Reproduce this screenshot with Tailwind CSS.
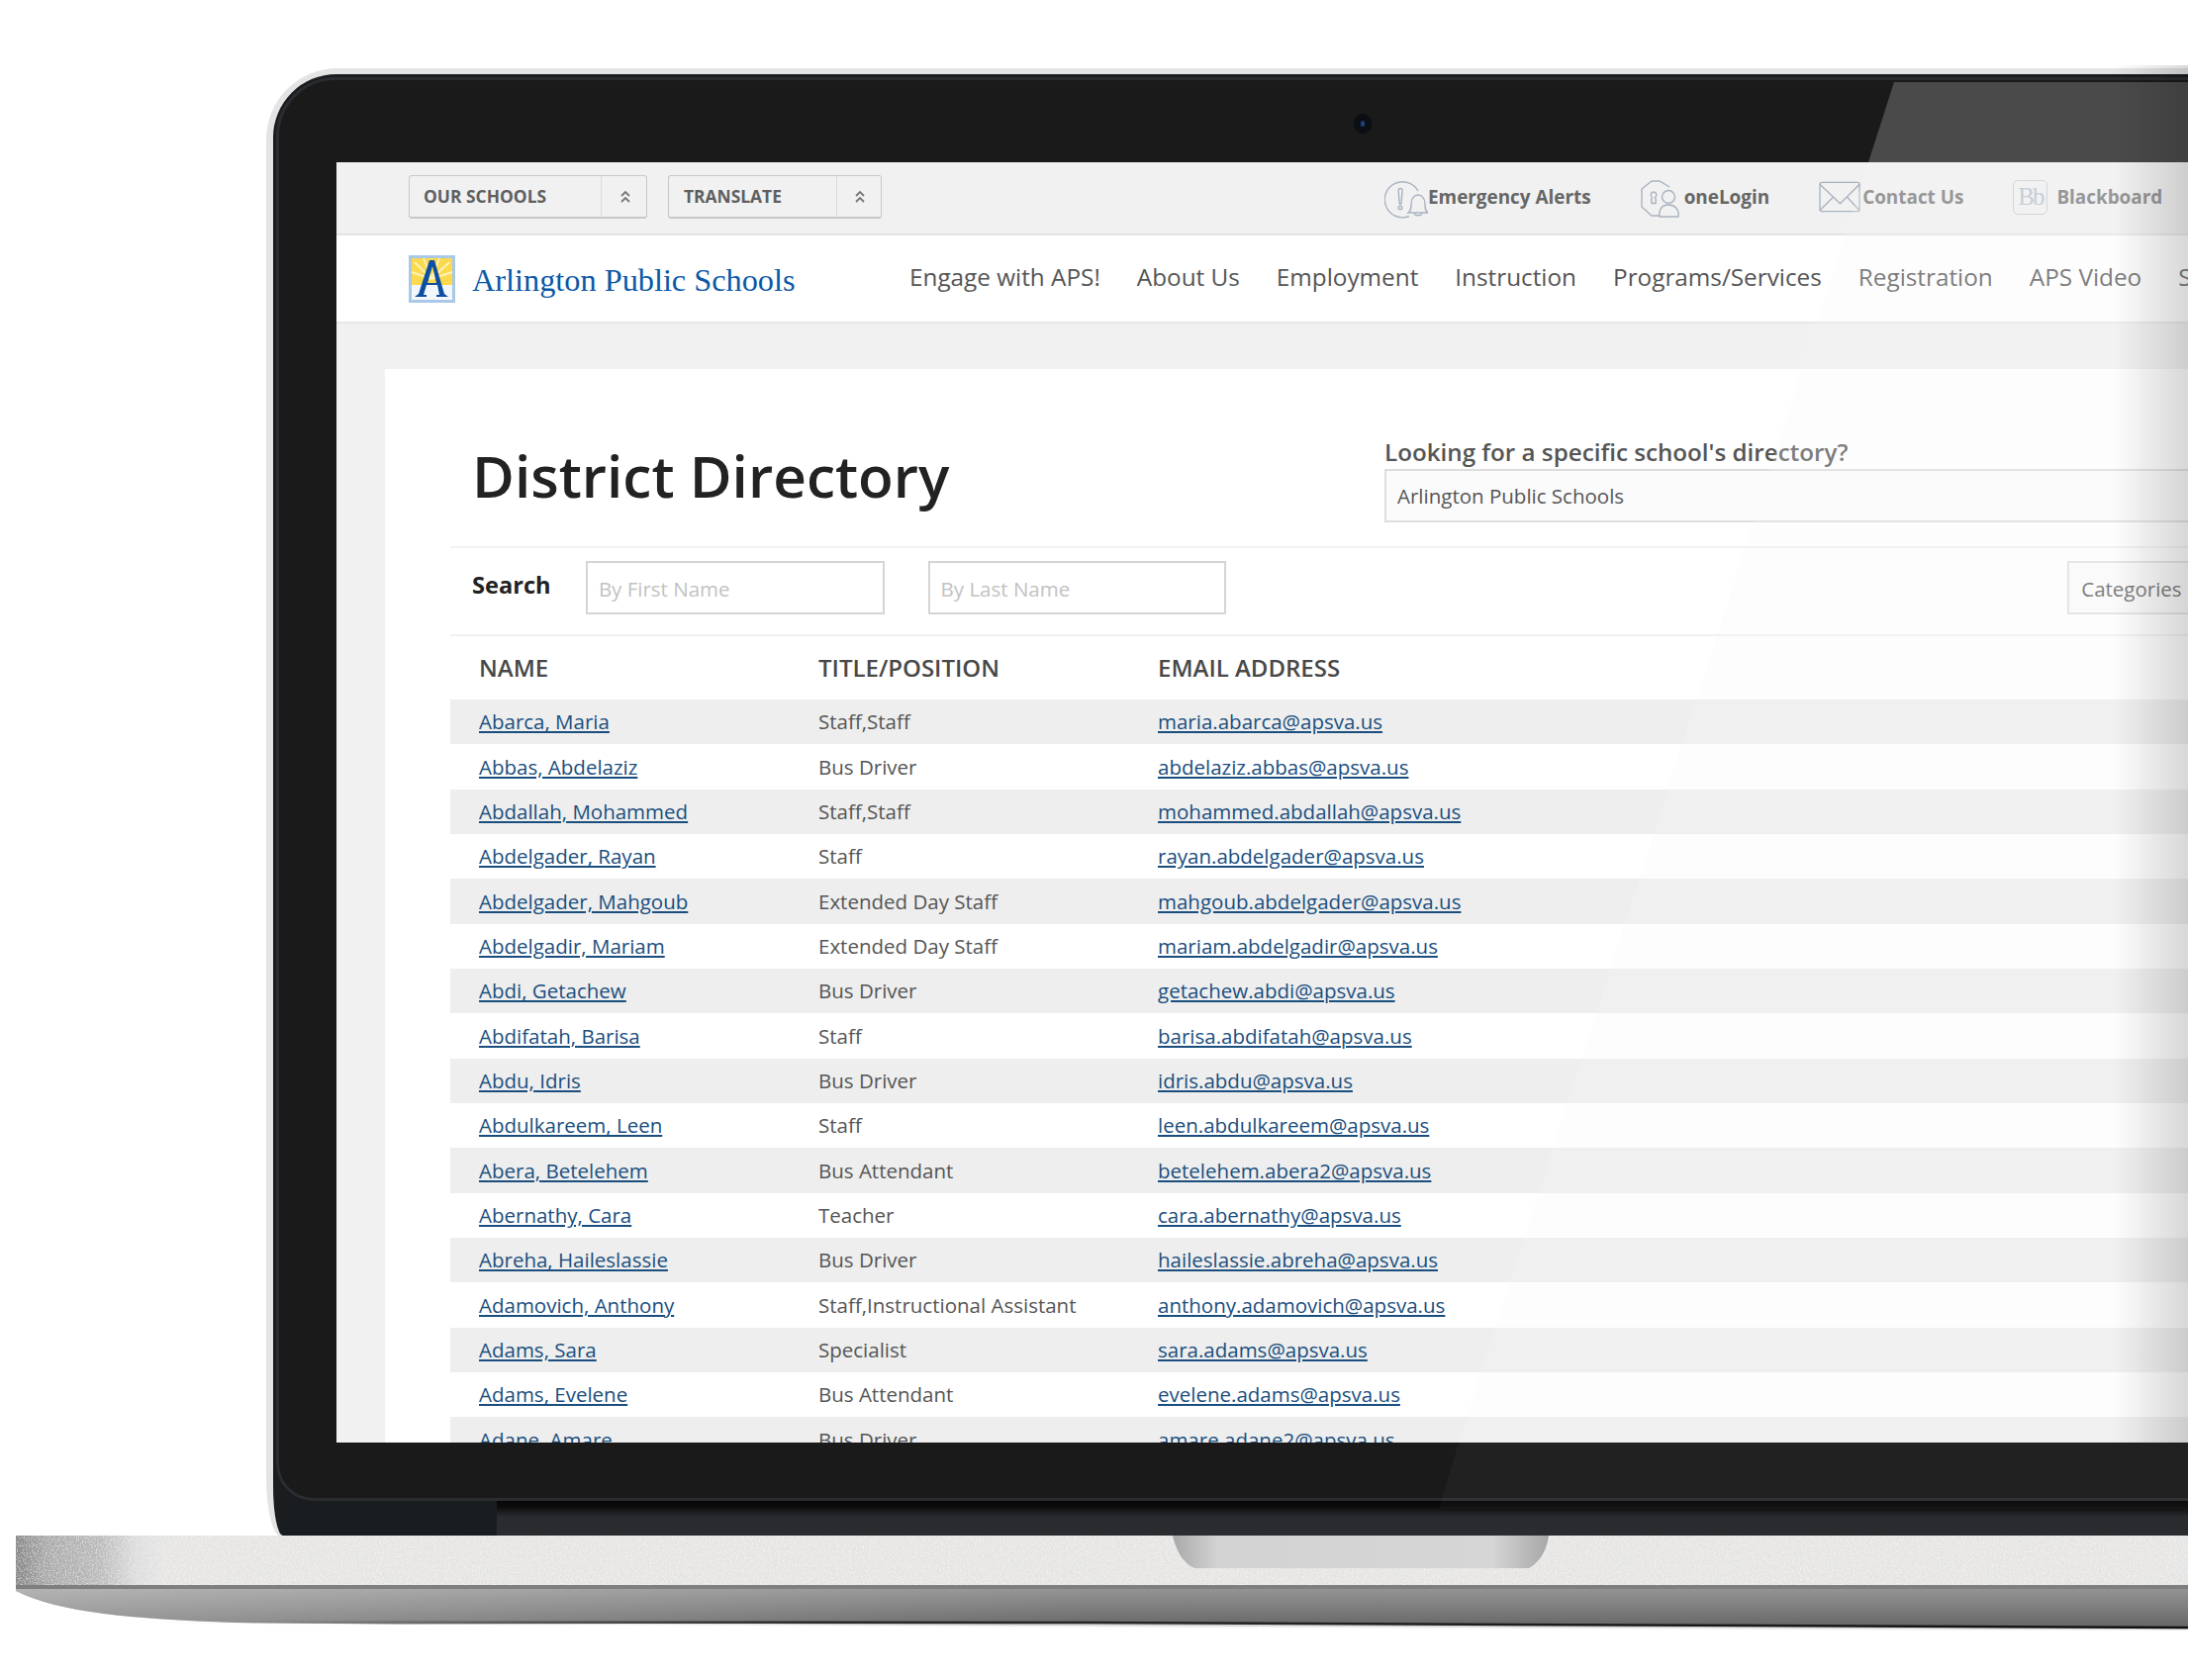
<!DOCTYPE html>
<html lang="en">
<head>
<meta charset="utf-8">
<title>District Directory</title>
<script src="https://cdn.jsdelivr.net/npm/@tailwindcss/browser@4"></script>
</head>
<body class="relative w-[2211px] h-[1698px] overflow-hidden bg-white font-['Open_Sans',sans-serif]">

<!-- lid -->
<div class="ml-[269px] mt-[69px] w-[2000px] h-[1483px] pl-[7px] pt-[6px] bg-[#e4e4e4] rounded-tl-[72px] rounded-bl-[14px_60px] overflow-hidden">
  <div class="flex flex-col h-full bg-[#1a1d20] rounded-tl-[64px] rounded-bl-[10px_50px] overflow-hidden">
    <!-- inner bezel -->
    <div class="relative ml-[3px] mt-[3px] h-[1439px] shrink-0 border-[3px] border-[#2b2c2f] rounded-tl-[60px] rounded-bl-[38px] bg-[#1a1a1a] pl-[58px] pt-[83px] pb-[56px]">
      <div class="absolute left-[1086px] top-[34px] w-[18px] h-[20px] rounded-full bg-[#0b0e13] flex items-center justify-center">
        <div class="w-[4px] h-[6px] rounded-full bg-[#1c3f7a]"></div>
      </div>

      <!-- screen -->
      <div class="w-[1900px] h-full overflow-hidden bg-[#f1f1f1]">
        <!-- utility bar -->
        <div class="flex h-[74px] pt-[13px] pl-[73px] border-b-2 border-[#e4e4e4] bg-[#f1f1f1]">
          <div class="flex w-[241px] h-[44px] rounded-[3px] border border-b-2 border-[#c8c8c8]">
            <div class="w-[194px] border-r border-[#dcdcdc] pl-[14px] text-[17.4px] leading-[41px] font-bold text-[#5f5f5f]">OUR SCHOOLS</div>
            <div class="flex flex-1 items-center justify-center pl-[2px]">
              <svg width="12" height="14" viewBox="0 0 12 14" fill="none" stroke="#777777" stroke-width="1.800"><path d="M2 6l4-4 4 4M2 12l4-4 4 4"/></svg>
            </div>
          </div>
          <div class="flex ml-[21px] w-[216px] h-[44px] rounded-[3px] border border-b-2 border-[#c8c8c8]">
            <div class="w-[170px] border-r border-[#dcdcdc] pl-[15px] text-[17.4px] leading-[41px] font-bold text-[#5f5f5f]">TRANSLATE</div>
            <div class="flex flex-1 items-center justify-center pl-[2px]">
              <svg width="12" height="14" viewBox="0 0 12 14" fill="none" stroke="#777777" stroke-width="1.800"><path d="M2 6l4-4 4 4M2 12l4-4 4 4"/></svg>
            </div>
          </div>

          <div class="flex items-center h-[44px] ml-[508px] text-[18.9px] font-bold text-[#666666] whitespace-nowrap">
            <svg class="shrink-0 mt-[3px]" width="44" height="40" viewBox="0 0 44 40" fill="none" stroke="#a9b3bf" stroke-width="1.400">
              <path d="M25 37.500A18 18 0 1 1 34 12"/>
              <path d="M16 9.500c-1.500 0-2 1-1.800 2.500l1 13h1.800l1-13c.2-1.500-.5-2.500-2-2.500z"/>
              <circle cx="16" cy="29" r="1.800"/>
              <path d="M24 34c3-2 3-5 3-9 0-5 3-9 7-9s7 4 7 9c0 4 0 7 3 9z"/>
              <path d="M30 34.500c.5 3 7.500 3 8 0"/>
            </svg>
            <span>Emergency Alerts</span>
          </div>
          <div class="flex items-center h-[44px] ml-[49px] text-[18.9px] font-bold text-[#666666] whitespace-nowrap">
            <svg class="shrink-0 mt-[3px]" width="45" height="40" viewBox="0 0 45 40" fill="none" stroke="#a9b3bf" stroke-width="1.400">
              <path d="M20 37h-8L2 28V10L12 2h8l10 6"/>
              <path d="M14 13a3 3 0 0 0-1.500 5.500c-1 1.500-1 4-.5 6h4c.5-2 .5-4.500-.5-6A3 3 0 0 0 14 13z"/>
              <circle cx="29" cy="18" r="6.500"/>
              <path d="M20 38c-1-8 3-12 9-12s11 4 10 12z"/>
            </svg>
            <span>oneLogin</span>
          </div>
          <div class="flex items-center h-[44px] ml-[50px] text-[18.9px] font-bold text-[#777777] whitespace-nowrap">
            <svg class="shrink-0" width="44" height="32" viewBox="0 0 45 32" fill="none" stroke="#a9b3bf" stroke-width="1.400">
              <rect x="1" y="1" width="41" height="30" rx="2"/>
              <path d="M1 3l21 20L42 3M1 30l14-14M42 30L29 16"/>
            </svg>
            <span>Contact Us</span>
          </div>
          <div class="flex items-center h-[44px] ml-[50px] text-[18.9px] font-bold text-[#777777] whitespace-nowrap">
            <div class="flex items-center w-[44px] shrink-0">
              <div class="flex items-center justify-center w-[35px] h-[35px] rounded-[5px] border-[1.5px] border-[#c3ccd5] text-[25px] font-normal tracking-[-2px] font-['Liberation_Serif',serif] text-[#b4c0cc]">Bb</div>
            </div>
            <span>Blackboard</span>
          </div>
        </div>

        <!-- main nav -->
        <div class="flex items-center h-[89px] pl-[73px] bg-white border-b-2 border-[#e6e6e6] whitespace-nowrap">
          <svg class="shrink-0" width="47" height="48" viewBox="0 0 47 48">
            <rect width="47" height="48" fill="#a9c9e6"/>
            <rect x="3" y="3" width="41" height="42" fill="#f4f8fc"/>
            <rect x="3" y="3" width="41" height="27" fill="#fcd94d"/>
            <g stroke="#fff3b8" stroke-width="2"><path d="M23 24L6 7M23 24L15 3M23 24l8-21M23 24L41 7M23 24L3 17M23 24l21-7"/></g>
            <path d="M21 5h5l10 34 4 3H28v-2h3l-2-10H18l-3 10h3v2H6l4-3zM19 28h9l-4-17z" fill="#0c4fa3" fill-rule="evenodd"/>
          </svg>
          <div class="ml-[17px] mt-[4px] w-[442px] shrink-0 text-[32.3px] leading-none font-['Liberation_Serif',serif] text-[#0b58a6]">Arlington Public Schools</div>
          <div class="flex gap-[37px] -mt-[3px] text-[24.3px] font-medium text-[#555555]">
            <span>Engage with APS!</span>
            <span>About Us</span>
            <span>Employment</span>
            <span>Instruction</span>
            <span>Programs/Services</span>
            <span>Registration</span>
            <span>APS Video</span>
            <span>Staff</span>
          </div>
        </div>

        <!-- content -->
        <div class="pl-[49px] pt-[46px]">
          <div class="w-[1900px] h-[1200px] pl-[66px] bg-white">
            <div class="flex h-[179px] border-b-2 border-[#f1f1f1] box-content">
              <div class="w-[944px] shrink-0 pl-[22px] pt-[71px]">
                <h1 class="text-[58.5px] leading-[72px] font-semibold text-[#222222]">District Directory</h1>
              </div>
              <div class="pt-[70px]">
                <div class="text-[24.2px] leading-[27px] font-semibold text-[#555555] whitespace-nowrap">Looking for a specific school's directory?</div>
                <div class="mt-[4px] w-[1000px] h-[54px] pl-[11px] border-2 border-[#dddddd] bg-[#fbfbfb] text-[20.5px] leading-[50px] text-[#555555]">Arlington Public Schools</div>
              </div>
            </div>

            <div class="flex h-[89px] pt-[13px] border-b-2 border-[#f1f1f1]">
              <div class="w-[137px] pl-[22px] text-[23.6px] leading-[48px] font-bold text-[#222222]">Search</div>
              <div class="w-[302px] h-[54px] pl-[11px] border-2 border-[#d5d5d5] bg-white text-[20.5px] leading-[52px] text-[#c2c2c2]">By First Name</div>
              <div class="ml-[44px] w-[302px] h-[54px] pl-[11px] border-2 border-[#d5d5d5] bg-white text-[20.5px] leading-[52px] text-[#c2c2c2]">By Last Name</div>
              <div class="ml-[850px] w-[200px] h-[54px] pl-[12px] border-2 border-[#dfdfdf] bg-[#fbfbfb] text-[20.5px] leading-[52px] text-[#555555]">Categories</div>
            </div>

            <div class="grid grid-cols-[343px_343px_1fr] items-center h-[64px] pl-[29px] text-[24px] font-semibold text-[#484848]">
              <div>NAME</div><div>TITLE/POSITION</div><div>EMAIL ADDRESS</div>
            </div>

            <div class="text-[20.5px] text-[#555555] whitespace-nowrap">
              <div class="grid grid-cols-[343px_343px_1fr] items-center h-[45.33px] pl-[29px] bg-[#eeeeee]"><a href="#" class="justify-self-start underline text-[#1a4e7e]">Abarca, Maria</a><div>Staff,Staff</div><a href="#" class="justify-self-start underline text-[#1a4e7e]">maria.abarca@apsva.us</a></div>
              <div class="grid grid-cols-[343px_343px_1fr] items-center h-[45.33px] pl-[29px]"><a href="#" class="justify-self-start underline text-[#1a4e7e]">Abbas, Abdelaziz</a><div>Bus Driver</div><a href="#" class="justify-self-start underline text-[#1a4e7e]">abdelaziz.abbas@apsva.us</a></div>
              <div class="grid grid-cols-[343px_343px_1fr] items-center h-[45.33px] pl-[29px] bg-[#eeeeee]"><a href="#" class="justify-self-start underline text-[#1a4e7e]">Abdallah, Mohammed</a><div>Staff,Staff</div><a href="#" class="justify-self-start underline text-[#1a4e7e]">mohammed.abdallah@apsva.us</a></div>
              <div class="grid grid-cols-[343px_343px_1fr] items-center h-[45.33px] pl-[29px]"><a href="#" class="justify-self-start underline text-[#1a4e7e]">Abdelgader, Rayan</a><div>Staff</div><a href="#" class="justify-self-start underline text-[#1a4e7e]">rayan.abdelgader@apsva.us</a></div>
              <div class="grid grid-cols-[343px_343px_1fr] items-center h-[45.33px] pl-[29px] bg-[#eeeeee]"><a href="#" class="justify-self-start underline text-[#1a4e7e]">Abdelgader, Mahgoub</a><div>Extended Day Staff</div><a href="#" class="justify-self-start underline text-[#1a4e7e]">mahgoub.abdelgader@apsva.us</a></div>
              <div class="grid grid-cols-[343px_343px_1fr] items-center h-[45.33px] pl-[29px]"><a href="#" class="justify-self-start underline text-[#1a4e7e]">Abdelgadir, Mariam</a><div>Extended Day Staff</div><a href="#" class="justify-self-start underline text-[#1a4e7e]">mariam.abdelgadir@apsva.us</a></div>
              <div class="grid grid-cols-[343px_343px_1fr] items-center h-[45.33px] pl-[29px] bg-[#eeeeee]"><a href="#" class="justify-self-start underline text-[#1a4e7e]">Abdi, Getachew</a><div>Bus Driver</div><a href="#" class="justify-self-start underline text-[#1a4e7e]">getachew.abdi@apsva.us</a></div>
              <div class="grid grid-cols-[343px_343px_1fr] items-center h-[45.33px] pl-[29px]"><a href="#" class="justify-self-start underline text-[#1a4e7e]">Abdifatah, Barisa</a><div>Staff</div><a href="#" class="justify-self-start underline text-[#1a4e7e]">barisa.abdifatah@apsva.us</a></div>
              <div class="grid grid-cols-[343px_343px_1fr] items-center h-[45.33px] pl-[29px] bg-[#eeeeee]"><a href="#" class="justify-self-start underline text-[#1a4e7e]">Abdu, Idris</a><div>Bus Driver</div><a href="#" class="justify-self-start underline text-[#1a4e7e]">idris.abdu@apsva.us</a></div>
              <div class="grid grid-cols-[343px_343px_1fr] items-center h-[45.33px] pl-[29px]"><a href="#" class="justify-self-start underline text-[#1a4e7e]">Abdulkareem, Leen</a><div>Staff</div><a href="#" class="justify-self-start underline text-[#1a4e7e]">leen.abdulkareem@apsva.us</a></div>
              <div class="grid grid-cols-[343px_343px_1fr] items-center h-[45.33px] pl-[29px] bg-[#eeeeee]"><a href="#" class="justify-self-start underline text-[#1a4e7e]">Abera, Betelehem</a><div>Bus Attendant</div><a href="#" class="justify-self-start underline text-[#1a4e7e]">betelehem.abera2@apsva.us</a></div>
              <div class="grid grid-cols-[343px_343px_1fr] items-center h-[45.33px] pl-[29px]"><a href="#" class="justify-self-start underline text-[#1a4e7e]">Abernathy, Cara</a><div>Teacher</div><a href="#" class="justify-self-start underline text-[#1a4e7e]">cara.abernathy@apsva.us</a></div>
              <div class="grid grid-cols-[343px_343px_1fr] items-center h-[45.33px] pl-[29px] bg-[#eeeeee]"><a href="#" class="justify-self-start underline text-[#1a4e7e]">Abreha, Haileslassie</a><div>Bus Driver</div><a href="#" class="justify-self-start underline text-[#1a4e7e]">haileslassie.abreha@apsva.us</a></div>
              <div class="grid grid-cols-[343px_343px_1fr] items-center h-[45.33px] pl-[29px]"><a href="#" class="justify-self-start underline text-[#1a4e7e]">Adamovich, Anthony</a><div>Staff,Instructional Assistant</div><a href="#" class="justify-self-start underline text-[#1a4e7e]">anthony.adamovich@apsva.us</a></div>
              <div class="grid grid-cols-[343px_343px_1fr] items-center h-[45.33px] pl-[29px] bg-[#eeeeee]"><a href="#" class="justify-self-start underline text-[#1a4e7e]">Adams, Sara</a><div>Specialist</div><a href="#" class="justify-self-start underline text-[#1a4e7e]">sara.adams@apsva.us</a></div>
              <div class="grid grid-cols-[343px_343px_1fr] items-center h-[45.33px] pl-[29px]"><a href="#" class="justify-self-start underline text-[#1a4e7e]">Adams, Evelene</a><div>Bus Attendant</div><a href="#" class="justify-self-start underline text-[#1a4e7e]">evelene.adams@apsva.us</a></div>
              <div class="grid grid-cols-[343px_343px_1fr] items-center h-[45.33px] pl-[29px] bg-[#eeeeee]"><a href="#" class="justify-self-start underline text-[#1a4e7e]">Adane, Amare</a><div>Bus Driver</div><a href="#" class="justify-self-start underline text-[#1a4e7e]">amare.adane2@apsva.us</a></div>
            </div>
          </div>
        </div>
      </div>
    </div>
    <!-- hinge -->
    <div class="ml-[226px] flex-1 bg-[linear-gradient(180deg,#060606,#0c0c0c_6px,#2a2b2f_16px,#2b2c30)]"></div>
  </div>
</div>

<!-- base top deck -->
<div class="relative ml-[16px] h-[50px] overflow-hidden bg-[linear-gradient(90deg,#868686_0,#a8a8a8_30px,#bababa_85px,#dcdcdc_122px,#e5e4e3_150px)]">
  <svg class="absolute inset-0" width="2195" height="50">
    <filter id="grain" x="0" y="0" width="100%" height="100%">
      <feTurbulence type="fractalNoise" baseFrequency="0.85" numOctaves="2" seed="4"/>
      <feColorMatrix values="0 0 0 0 1  0 0 0 0 1  0 0 0 0 1  0 0 0 3.500 -1.600"/>
    </filter>
    <rect width="2195" height="50" filter="url(#grain)" opacity="0.55"/>
  </svg>
  <svg class="absolute left-[1169px] top-0" width="380" height="33" viewBox="0 0 380 33">
    <defs>
      <linearGradient id="notch" x1="0" x2="1" y1="0" y2="0">
        <stop offset="0" stop-color="#a9a9a9"/><stop offset="0.12" stop-color="#d2d2d2"/>
        <stop offset="0.85" stop-color="#d6d6d6"/><stop offset="1" stop-color="#a6a6a6"/>
      </linearGradient>
    </defs>
    <path d="M0 0h380c-2 14-8 26-20 33H22C10 28 3 14 0 0z" fill="url(#notch)"/>
  </svg>
</div>

<!-- base front edge -->
<svg class="block" width="2211" height="52" viewBox="0 0 2211 52">
  <defs>
    <linearGradient id="front" x1="0" x2="0" y1="0" y2="1">
      <stop offset="0" stop-color="#98989a"/><stop offset="1" stop-color="#666666"/>
    </linearGradient>
    <linearGradient id="gloss" x1="0" x2="1" y1="0" y2="0">
      <stop offset="0" stop-color="#ffffff" stop-opacity="0.3"/><stop offset="0.5" stop-color="#ffffff" stop-opacity="0"/>
    </linearGradient>
    <linearGradient id="edge" x1="0" x2="1" y1="0" y2="0">
      <stop offset="0" stop-color="#111111" stop-opacity="0"/><stop offset="0.3" stop-color="#111111" stop-opacity="0.8"/><stop offset="1" stop-color="#111111"/>
    </linearGradient>
    <filter id="soft"><feGaussianBlur stdDeviation="1.200"/></filter>
  </defs>
  <path d="M150 37H2211V45L1100 41z" fill="#8a8a8a" filter="url(#soft)" opacity="0.5"/>
  <path d="M16 0H2211V43L1100 38L400 39.500L240 38C130 34 60 28 16 6z" fill="url(#front)"/>
  <path d="M16 0H2211V43L1100 38L400 39.500L240 38C130 34 60 28 16 6z" fill="url(#gloss)"/>
  <rect x="16" y="0" width="2195" height="4" fill="#807f80"/>
  <path d="M240 37.500L1100 38L2211 43" fill="none" stroke="url(#edge)" stroke-width="2.500"/>
</svg>

<!-- glass and edge shading, over the whole laptop -->
<svg class="absolute left-0 top-0 pointer-events-none" width="2211" height="1698" viewBox="0 0 2211 1698">
  <defs>
    <linearGradient id="fade" x1="0" x2="1" y1="0" y2="0">
      <stop offset="0" stop-color="#000000" stop-opacity="0"/><stop offset="1" stop-color="#000000" stop-opacity="0.15"/>
    </linearGradient>
  </defs>
  <path d="M1914 83H2211V164H1888z" fill="#ffffff" fill-opacity="0.21"/>
  <path d="M1888 164H2211V1458H1474z" fill="#f8f8f8" fill-opacity="0.25"/>
  <path d="M1474 1458H2211V1525H1454z" fill="#ffffff" fill-opacity="0.03"/>
  <rect x="2136" y="66" width="75" height="1392" fill="url(#fade)"/>
</svg>

</body>
</html>
